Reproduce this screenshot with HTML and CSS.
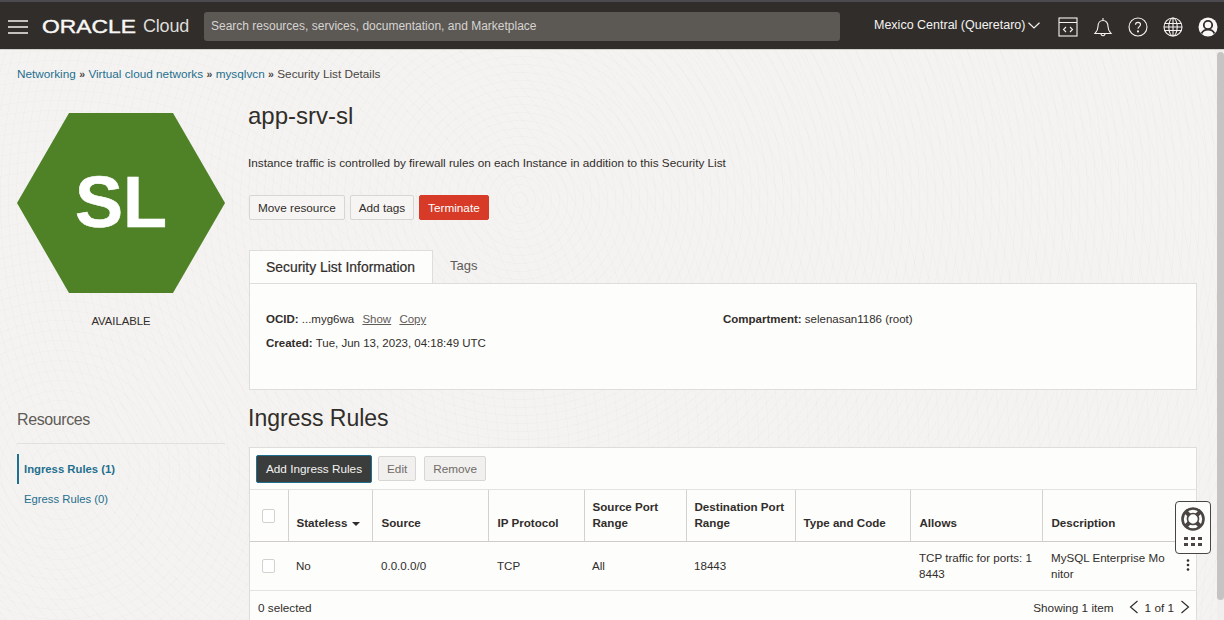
FILE: index.html
```html
<!DOCTYPE html>
<html lang="en">
<head>
<meta charset="utf-8">
<title>app-srv-sl</title>
<link rel="stylesheet" href="styles.css">
</head>
<body>
<header class="topbar">
  <svg class="burger" width="20" height="14" viewBox="0 0 20 14"><path d="M0 1h20M0 7h20M0 13h20" stroke="#f4f3f1" stroke-width="1.4" fill="none"/></svg>
  <div class="brand">
    <svg class="wordmark" width="96" height="18" viewBox="0 0 96 18"><text x="0" y="15" textLength="94" lengthAdjust="spacingAndGlyphs" class="wordmark-text">ORACLE</text></svg>
    <span class="cloud">Cloud</span>
  </div>
  <div class="search">Search resources, services, documentation, and Marketplace</div>
  <div class="region">Mexico Central (Queretaro)
    <svg width="12" height="7" viewBox="0 0 12 7"><path d="M.5.7 6 6l5.500-5.300" stroke="#f4f3f1" stroke-width="1.200" fill="none"/></svg>
  </div>
  <div class="tools">
    <svg width="20" height="20" viewBox="0 0 20 20" fill="none" stroke="#f4f3f1" stroke-width="1.100"><rect x="1" y="1" width="18" height="18"/><path d="M1 5.500h18M8 10l-2.500 2.500L8 15M12 10l2.500 2.500L12 15"/></svg>
    <svg width="20" height="20" viewBox="0 0 20 20" fill="none" stroke="#f4f3f1" stroke-width="1.100"><path d="M2 16.500c2-2 3-3 3-7 0-3.500 2-6 5-6s5 2.500 5 6c0 4 1 5 3 7zM10 1v2.500M8 16.500c0 3 4 3 4 0"/></svg>
    <svg width="20" height="20" viewBox="0 0 20 20" fill="none" stroke="#f4f3f1" stroke-width="1.100"><circle cx="10" cy="10" r="9"/><path d="M7.500 7.800C7.500 6.300 8.600 5.400 10 5.400s2.500.9 2.500 2.200c0 2-2.500 2-2.500 4.200"/><circle cx="10" cy="14.400" r=".5"/></svg>
    <svg width="20" height="20" viewBox="0 0 20 20" fill="none" stroke="#f4f3f1" stroke-width="1.100"><circle cx="10" cy="10" r="9"/><ellipse cx="10" cy="10" rx="4.200" ry="9"/><path d="M10 1v18M1.800 6.500h16.400M1.800 13.500h16.400M1 10h18"/></svg>
    <svg width="20" height="20" viewBox="0 0 20 20"><circle cx="10" cy="10" r="9.500" fill="#f8f7f5"/><circle cx="10" cy="8" r="4.200" fill="none" stroke="#312d2a" stroke-width="1.800"/><path d="M3.500 16.500c1.500-3 4-3.800 6.500-3.800s5 .8 6.500 3.800" fill="none" stroke="#312d2a" stroke-width="1.800"/></svg>
  </div>
</header>

<div class="viewport">
  <div class="page">
    <nav class="crumbs">
      <a class="link">Networking</a><span class="sep">»</span>
      <a class="link">Virtual cloud networks</a><span class="sep">»</span>
      <a class="link">mysqlvcn</a><span class="sep">»</span>
      <span>Security List Details</span>
    </nav>
    <div class="columns">
      <aside class="side">
        <div class="hex"><span>SL</span></div>
        <div class="status">AVAILABLE</div>
        <h2 class="res-title">Resources</h2>
        <ul class="res-list">
          <li class="res-item active">Ingress Rules (1)</li>
          <li class="res-item">Egress Rules (0)</li>
        </ul>
      </aside>
      <main class="main">
        <h1 class="title">app-srv-sl</h1>
        <p class="desc">Instance traffic is controlled by firewall rules on each Instance in addition to this Security List</p>
        <div class="actions">
          <button class="btn">Move resource</button>
          <button class="btn">Add tags</button>
          <button class="btn danger">Terminate</button>
        </div>
        <div class="tabs">
          <div class="tab active">Security List Information</div>
          <div class="tab">Tags</div>
        </div>
        <section class="info">
          <div class="info-col">
            <div class="info-row"><b>OCID:</b> ...myg6wa <a class="plain first">Show</a> <a class="plain">Copy</a></div>
            <div class="info-row"><b>Created:</b> Tue, Jun 13, 2023, 04:18:49 UTC</div>
          </div>
          <div class="info-col">
            <div class="info-row"><b>Compartment:</b> selenasan1186 (root)</div>
          </div>
        </section>
        <h2 class="section-title">Ingress Rules</h2>
        <section class="rules">
          <div class="toolbar">
            <button class="btn primary">Add Ingress Rules</button>
            <button class="btn off">Edit</button>
            <button class="btn off">Remove</button>
          </div>
          <table class="grid">
            <thead>
              <tr>
                <th><span class="check"></span></th>
                <th>Stateless <span class="caret"></span></th>
                <th>Source</th>
                <th>IP Protocol</th>
                <th>Source Port Range</th>
                <th>Destination Port Range</th>
                <th>Type and Code</th>
                <th>Allows</th>
                <th>Description</th>
              </tr>
            </thead>
            <tbody>
              <tr>
                <td><span class="check"></span></td>
                <td>No</td>
                <td>0.0.0.0/0</td>
                <td>TCP</td>
                <td>All</td>
                <td>18443</td>
                <td></td>
                <td class="breaking">TCP traffic for ports: 18443</td>
                <td class="breaking">MySQL Enterprise Monitor</td>
              </tr>
            </tbody>
          </table>
          <div class="foot">
            <span>0 selected</span>
            <div class="pager">
              <span class="showing">Showing 1 item</span>
              <svg width="10" height="14" viewBox="0 0 10 14"><path d="M8.500 1 1.500 7l7 6" fill="none" stroke="#312d2a" stroke-width="1.200"/></svg>
              <span>1 of 1</span>
              <svg width="10" height="14" viewBox="0 0 10 14"><path d="M1.500 1l7 6-7 6" fill="none" stroke="#312d2a" stroke-width="1.200"/></svg>
            </div>
          </div>
        </section>
      </main>
    </div>
  </div>
  <div class="scrollbar"><div class="thumb"></div></div>
  <svg class="kebab" width="4" height="12" viewBox="0 0 4 12"><circle cx="2" cy="1.500" r="1.300"/><circle cx="2" cy="6" r="1.300"/><circle cx="2" cy="10.500" r="1.300"/></svg>
  <div class="help">
    <svg width="26" height="26" viewBox="0 0 26 26" fill="none"><circle cx="13" cy="13" r="10.500" stroke="#4a4542" stroke-width="2.600"/><circle cx="13" cy="13" r="5.500" stroke="#4a4542" stroke-width="1.600"/><path d="M5.500 5.500l4 4M20.500 5.500l-4 4M5.500 20.500l4-4M20.500 20.500l-4-4" stroke="#4a4542" stroke-width="4"/></svg>
    <div class="dots"><i></i><i></i><i></i><i></i><i></i><i></i></div>
  </div>
</div>
</body>
</html>
```
FILE: styles.css
```css
* { box-sizing: border-box; }
html, body { margin: 0; height: 620px; overflow: hidden; }
body {
  font-family: "Liberation Sans", Arial, sans-serif;
  font-size: 11.75px;
  color: #312d2a;
  background: #f4f3f1;
}
.topbar {
  height: 50px;
  display: flex;
  align-items: center;
  background: #312d2a;
  border-top: 2px solid #4b4a4e;
  border-bottom: 1px solid #d5d3d0;
  color: #f4f3f1;
  padding: 2px 6px 0 8px;
}
.burger { flex: none; margin-right: 14px; }
.brand { display: flex; align-items: center; width: 162px; flex: none; }
.wordmark { flex: none; margin-right: 5px; }
.wordmark-text { font: 18px "Liberation Sans", Arial, sans-serif; fill: #f8f7f5; stroke: #f8f7f5; stroke-width: .4px; }
.cloud { font-size: 18px; letter-spacing: -.2px; color: #dedcd9; }
.search {
  width: 636px;
  height: 29px;
  flex: none;
  line-height: 29px;
  padding-left: 7px;
  border-radius: 3px;
  background: #5c5854;
  color: #d6d4d1;
  font-size: 12px;
}
.region {
  display: flex;
  align-items: center;
  gap: 3px;
  margin: 0 0 3px 34px;
  font-size: 12.5px;
  white-space: nowrap;
}
.tools { display: flex; gap: 15px; margin-left: 18px; }
.viewport {
  position: relative;
  height: 570px;
  display: flex;
  overflow: hidden;
  background:
    repeating-radial-gradient(circle at 520px 150px, transparent 0 7px, rgba(120,115,105,.028) 7px 8px),
    repeating-radial-gradient(circle at 60px 420px, transparent 0 9px, rgba(120,115,105,.025) 9px 10px),
    #f4f3f1;
}
.page { width: 1217px; flex: none; }
.crumbs {
  display: flex;
  height: 50px;
  padding: 17px 0 0 17px;
  color: #4a4542;
  line-height: 14px;
  white-space: nowrap;
}
.link { color: #1f6f8f; }
.sep { width: 12.600px; text-align: center; font-weight: bold; font-size: 10.5px; }
.columns { display: flex; align-items: flex-start; margin-left: 17px; }
.side { width: 208px; flex: none; margin-right: 23px; }
.hex {
  height: 180px;
  margin-top: 13px;
  padding-bottom: 3px;
  display: flex;
  align-items: center;
  justify-content: center;
  background: #4f8127;
  clip-path: polygon(0 50%, 25% 0, 75% 0, 100% 50%, 75% 100%, 25% 100%);
  color: #fff;
  font-size: 72px;
  font-weight: bold;
  -webkit-text-stroke: .6px #fff;
}
.status { margin-top: 21px; text-align: center; line-height: 14px; font-size: 11.3px; }
.res-title {
  margin: 82px 0 0;
  padding-bottom: 13px;
  border-bottom: 1px solid #e2e0dd;
  font-size: 16px;
  letter-spacing: -.4px;
  font-weight: normal;
  line-height: 20px;
  color: #5f5b57;
}
.res-list { list-style: none; margin: 10px 0 0; padding: 0; }
.res-item { height: 30px; line-height: 30px; padding-left: 7px; color: #1f6f8f; font-size: 11.3px; }
.res-item.active { border-left: 2px solid #1f6f8f; padding-left: 5px; font-weight: bold; }
.main { width: 949px; flex: none; }
.title { margin: 0; padding-top: 1px; font-size: 24px; font-weight: normal; line-height: 30px; color: #312d2a; }
.desc { margin: 25px 0 0; line-height: 14px; }
.actions { display: flex; gap: 5px; margin-top: 25px; padding-left: 1px; }
.btn {
  height: 25px;
  padding: 0 8px 1px;
  border: 1px solid #d8d6d3;
  border-radius: 2px;
  background: #f6f5f3;
  color: #312d2a;
  font: 11.75px "Liberation Sans", Arial, sans-serif;
}
.btn.danger { background: #d73a26; border-color: #d73a26; color: #fff; }
.btn.primary {
  height: 28px;
  border: 1px solid #1f6f8f;
  background: #3b3d3c;
  color: #f4f3f1;
  padding: 0 9px;
}
.btn.off { color: #6f6b67; background: #f1f0ee; }
.tabs { display: flex; align-items: stretch; height: 33px; margin: 30px 0 0 1px; }
.tab { padding: 0 17px; line-height: 31px; font-size: 13px; color: #5f5b57; }
.tab.active {
  background: #fdfdfc;
  border: 1px solid #dfddda;
  border-bottom: 0;
  color: #312d2a;
  line-height: 33px;
  width: 184px;
  padding: 0 16px;
  white-space: nowrap;
  font-size: 13.9px;
  -webkit-text-stroke: .2px #312d2a;
}
.info {
  display: flex;
  height: 107px;
  margin-left: 1px;
  padding-top: 28px;
  background: #fdfdfc;
  border: 1px solid #dfddda;
  font-size: 11.5px;
}
.info-col { width: 457px; padding-left: 16px; }
.info-row { line-height: 14px; margin-bottom: 10px; white-space: nowrap; }
.plain { margin-left: 5px; text-decoration: underline; color: #5f5b57; }
.section-title { margin: 14px 0 15px; font-size: 23px; font-weight: normal; line-height: 28px; }
.rules {
  margin-left: 1px;
  background: #fdfdfc;
  border: 1px solid #dfddda;
  border-bottom: 0;
}
.toolbar { display: flex; align-items: center; gap: 6px; height: 41px; padding: 0 0 0 6px; }
.toolbar .btn.off + .btn.off { margin-left: 2px; }
.grid { width: 947px; table-layout: fixed; border-collapse: collapse; font-size: 11.6px; }
.grid th {
  height: 52px;
  padding: 0 4px 10px 8px;
  vertical-align: bottom;
  text-align: left;
  line-height: 16px;
  font-size: 11.6px;
  color: #312d2a;
  border-top: 1px solid #e5e3e0;
  border-bottom: 1px solid #cfccc8;
  border-left: 1px solid #d5d2ce;
}
.grid th:first-child, .grid td:first-child { border-left: 0; width: 38px; padding-left: 12px; }
.grid th:nth-child(2) { width: 84px; }
.grid th:nth-child(3) { width: 116px; }
.grid th:nth-child(4) { width: 96px; }
.grid th:nth-child(5) { width: 102px; }
.grid th:nth-child(6) { width: 109px; }
.grid th:nth-child(7) { width: 115px; }
.grid th:nth-child(8) { width: 132px; }
.grid td {
  height: 49px;
  padding: 0 8px;
  line-height: 16px;
  border-bottom: 1px solid #e5e3e0;
}
.grid th:nth-child(3), .grid td:nth-child(3),
.grid th:nth-child(4), .grid td:nth-child(4),
.grid th:nth-child(8), .grid td:nth-child(8),
.grid th:nth-child(9), .grid td:nth-child(9) { padding-left: 9px; }
.grid td.breaking { word-break: break-all; }
.grid th:last-child, .grid td:last-child { padding-right: 30px; }
.grid th .check { margin-bottom: 8px; }
.check {
  display: block;
  width: 13px;
  height: 14px;
  border: 1px solid #d5d2ce;
  border-radius: 2px;
  background: #fff;
}
.caret {
  display: inline-block;
  margin: 0 0 1px 1px;
  border: 4px solid transparent;
  border-top-color: #312d2a;
  border-bottom: 0;
}
.foot { display: flex; justify-content: space-between; align-items: center; height: 32px; padding: 0 6px 0 8px; }
.pager { display: flex; align-items: center; gap: 6px; }
.showing { margin-right: 9px; }
.scrollbar { flex: 1; padding-top: 2px; background: #f0efed; }
.thumb { width: 7px; height: 548px; border-radius: 4px; background: #c5c4c2; margin-left: 0; }
.kebab { position: absolute; left: 1186px; top: 509px; fill: #312d2a; }
.help {
  position: absolute;
  left: 1175px;
  top: 451px;
  width: 36px;
  height: 53px;
  padding-top: 4px;
  display: flex;
  flex-direction: column;
  align-items: center;
  background: #fdfdfc;
  border: 1.500px solid #4a4542;
  border-radius: 4px;
}
.dots { display: grid; grid-template-columns: repeat(3, 4px); gap: 3px; margin-top: 5px; }
.dots i { width: 4px; height: 3px; background: #4a4542; }
```
